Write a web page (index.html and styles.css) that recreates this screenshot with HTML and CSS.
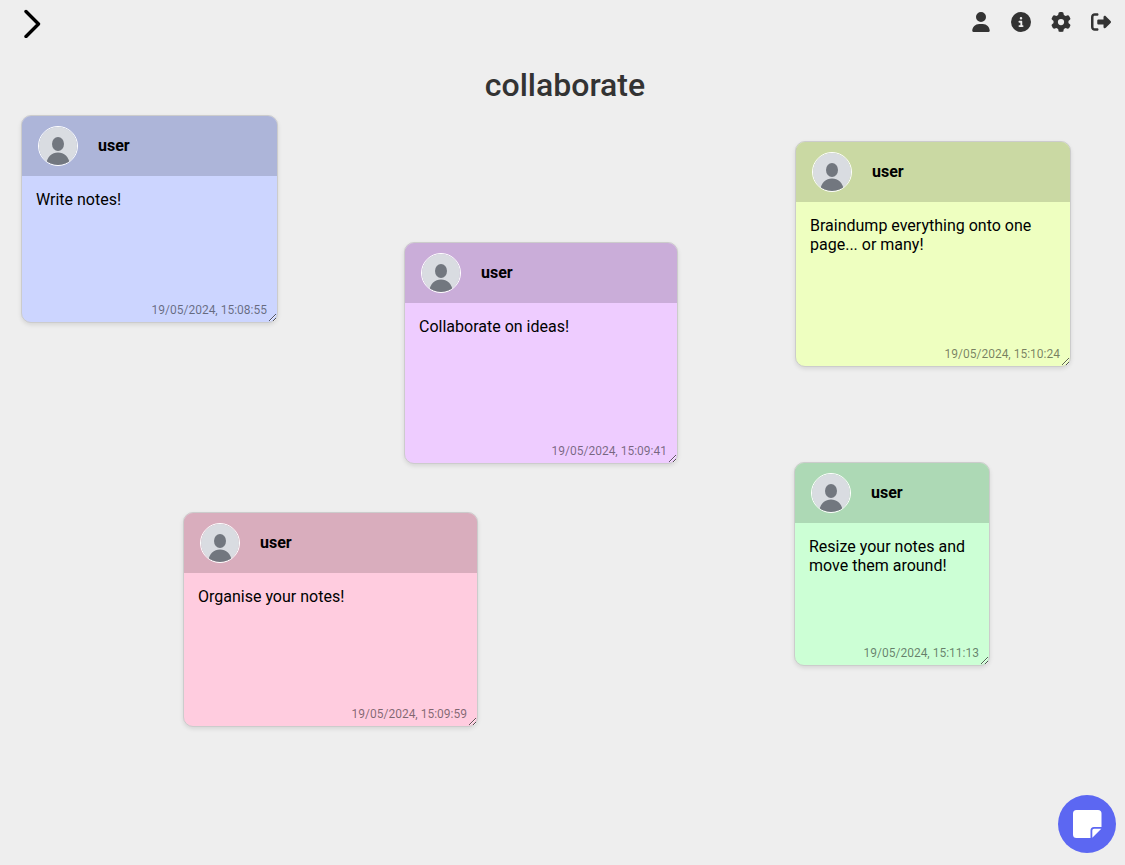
FILE: index.html
```html
<!DOCTYPE html>
<html lang="en">
<head>
<meta charset="utf-8">
<meta name="viewport" content="width=device-width, initial-scale=1">
<title>collaborate</title>
<link rel="stylesheet" href="styles.css">
</head>
<body>
<svg class="sprite" aria-hidden="true">
  <symbol id="avatar" viewBox="0 0 38 38">
    <rect width="38" height="38" fill="#d9dce1"/>
    <ellipse cx="19" cy="17" rx="6" ry="7" fill="#72777f"/>
    <path d="M7 38C8 29.500 13 25.500 19 25.500S30 29.500 31 38z" fill="#72777f"/>
  </symbol>
</svg>
<header class="topbar">
  <button class="icon-button" type="button" aria-label="Open menu">
    <svg class="chevron" viewBox="0 0 20 30"><path d="M4 3.500 16.500 16 4 28.500" fill="none" stroke="#000" stroke-width="3.400" stroke-linecap="round" stroke-linejoin="round"/></svg>
  </button>
  <nav class="actions" aria-label="Account">
    <button class="icon-button" type="button" aria-label="Profile"><svg class="icon" viewBox="0 0 448 512"><path d="M224 256A128 128 0 1 0 224 0a128 128 0 1 0 0 256zm-45.7 48C79.8 304 0 383.8 0 482.3C0 498.7 13.3 512 29.7 512l388.6 0c16.4 0 29.7-13.3 29.7-29.7C448 383.8 368.2 304 269.7 304l-91.4 0z"/></svg></button>
    <button class="icon-button" type="button" aria-label="Information"><svg class="icon" viewBox="0 0 512 512"><path d="M256 512A256 256 0 1 0 256 0a256 256 0 1 0 0 512zM216 336l24 0 0-64-24 0c-13.3 0-24-10.7-24-24s10.7-24 24-24l48 0c13.3 0 24 10.7 24 24l0 88 8 0c13.3 0 24 10.7 24 24s-10.7 24-24 24l-80 0c-13.3 0-24-10.7-24-24s10.7-24 24-24zm40-208a32 32 0 1 1 0 64 32 32 0 1 1 0-64z"/></svg></button>
    <button class="icon-button" type="button" aria-label="Settings"><svg class="icon" viewBox="0 0 512 512"><path d="M495.9 166.6c3.2 8.7 .5 18.4-6.4 24.6l-43.3 39.4c1.1 8.3 1.7 16.8 1.7 25.4s-.6 17.1-1.7 25.4l43.3 39.4c6.9 6.2 9.6 15.9 6.4 24.6c-4.4 11.9-9.7 23.3-15.8 34.3l-4.7 8.1c-6.6 11-14 21.4-22.1 31.2c-5.9 7.2-15.7 9.6-24.5 6.8l-55.7-17.7c-13.4 10.3-28.2 18.9-44 25.4l-12.5 57.1c-2 9.1-9 16.3-18.2 17.8c-13.8 2.3-28 3.5-42.5 3.5s-28.7-1.2-42.5-3.5c-9.2-1.5-16.2-8.7-18.2-17.8l-12.5-57.1c-15.8-6.5-30.6-15.1-44-25.4L83.1 425.9c-8.8 2.8-18.6 .3-24.5-6.8c-8.1-9.8-15.5-20.2-22.1-31.2l-4.7-8.1c-6.1-11-11.4-22.4-15.8-34.3c-3.2-8.7-.5-18.4 6.4-24.6l43.3-39.4C64.6 273.1 64 264.6 64 256s.6-17.1 1.7-25.4L22.4 191.2c-6.9-6.2-9.6-15.9-6.4-24.6c4.4-11.9 9.7-23.3 15.8-34.3l4.7-8.1c6.6-11 14-21.4 22.1-31.2c5.9-7.2 15.7-9.6 24.5-6.8l55.7 17.7c13.4-10.3 28.2-18.9 44-25.4l12.5-57.1c2-9.1 9-16.3 18.2-17.8C227.3 1.2 241.5 0 256 0s28.7 1.2 42.5 3.500c9.2 1.5 16.2 8.7 18.2 17.8l12.5 57.1c15.8 6.5 30.6 15.1 44 25.4l55.7-17.7c8.8-2.8 18.6-.3 24.5 6.8c8.1 9.8 15.5 20.2 22.1 31.2l4.7 8.1c6.1 11 11.4 22.4 15.8 34.3zM256 336a80 80 0 1 0 0-160 80 80 0 1 0 0 160z"/></svg></button>
    <button class="icon-button" type="button" aria-label="Log out"><svg class="icon" viewBox="0 0 512 512"><path d="M377.9 105.9L500.7 228.7c7.2 7.2 11.3 17.1 11.3 27.3s-4.1 20.1-11.3 27.3L377.9 406.1c-6.4 6.4-15 9.9-24 9.9c-18.7 0-33.9-15.2-33.9-33.9l0-62.1-128 0c-17.7 0-32-14.3-32-32l0-64c0-17.7 14.3-32 32-32l128 0 0-62.1c0-18.7 15.2-33.9 33.9-33.9c9 0 17.6 3.6 24 9.9zM160 96L96 96c-17.7 0-32 14.3-32 32l0 256c0 17.7 14.3 32 32 32l64 0c17.7 0 32 14.3 32 32s-14.3 32-32 32l-64 0c-53 0-96-43-96-96L0 128C0 75 43 32 96 32l64 0c17.7 0 32 14.3 32 32s-14.3 32-32 32z"/></svg></button>
  </nav>
</header>
<h1 class="title">collaborate</h1>
<main class="board">
  <article class="note note-blue">
    <header class="note-head"><svg class="avatar" role="img" aria-label="Avatar"><use href="#avatar"/></svg><span class="name">user</span></header>
    <p class="note-text">Write notes!</p>
    <time class="stamp" datetime="2024-05-19T15:08:55">19/05/2024, 15:08:55</time>
  </article>
  <article class="note note-yellow">
    <header class="note-head"><svg class="avatar" role="img" aria-label="Avatar"><use href="#avatar"/></svg><span class="name">user</span></header>
    <p class="note-text">Braindump everything onto one page... or many!</p>
    <time class="stamp" datetime="2024-05-19T15:10:24">19/05/2024, 15:10:24</time>
  </article>
  <article class="note note-purple">
    <header class="note-head"><svg class="avatar" role="img" aria-label="Avatar"><use href="#avatar"/></svg><span class="name">user</span></header>
    <p class="note-text">Collaborate on ideas!</p>
    <time class="stamp" datetime="2024-05-19T15:09:41">19/05/2024, 15:09:41</time>
  </article>
  <article class="note note-green">
    <header class="note-head"><svg class="avatar" role="img" aria-label="Avatar"><use href="#avatar"/></svg><span class="name">user</span></header>
    <p class="note-text">Resize your notes and move them around!</p>
    <time class="stamp" datetime="2024-05-19T15:11:13">19/05/2024, 15:11:13</time>
  </article>
  <article class="note note-pink">
    <header class="note-head"><svg class="avatar" role="img" aria-label="Avatar"><use href="#avatar"/></svg><span class="name">user</span></header>
    <p class="note-text">Organise your notes!</p>
    <time class="stamp" datetime="2024-05-19T15:09:59">19/05/2024, 15:09:59</time>
  </article>
</main>
<button class="add-note" type="button" aria-label="Add note">
  <svg class="add-icon" viewBox="0 0 30 30"><path d="M4.500 1H26Q29.500 1 29.500 4.500V18H22Q18.500 18 18.500 21.500V29H4.500Q1 29 1 25.500V4.500Q1 1 4.500 1zM22 19.800H29.300L20.300 28.800V21.500Q20.300 19.800 22 19.800z" fill="#fff"/></svg>
</button>
</body>
</html>
```
FILE: styles.css
```css
* {
  box-sizing: border-box;
}

body {
  display: flex;
  flex-direction: column;
  min-height: 100vh;
  margin: 0;
  background: #eee;
  color: #000;
  font-family: Roboto, sans-serif;
  font-size: 16px;
}

.sprite {
  position: absolute;
  width: 0;
  height: 0;
}

button {
  display: flex;
  align-items: center;
  justify-content: center;
  padding: 0;
  border: 0;
  background: none;
  cursor: pointer;
}

.topbar {
  display: flex;
  justify-content: space-between;
  align-items: flex-start;
  padding: 8px 14px 0 22px;
}

.chevron {
  width: 20px;
  height: 30px;
}

.actions {
  display: flex;
  gap: 20px;
  padding-top: 4px;
}

.icon {
  width: 20px;
  height: 20px;
  fill: #333;
}

.title {
  margin: 28px 0 0;
  padding-left: 5px;
  color: #333;
  font-size: 32px;
  font-weight: 500;
  line-height: 38px;
  text-align: center;
}

.board {
  position: relative;
  flex: 1;
}

.note {
  position: absolute;
  display: flex;
  flex-direction: column;
  overflow: hidden;
  resize: both;
  border: 1px solid #ccc;
  border-radius: 10px;
  box-shadow: 0 2px 4px rgba(0, 0, 0, 0.1);
}

.note-head {
  display: flex;
  align-items: center;
  gap: 20px;
  height: 60px;
  padding: 0 16px;
  background: rgba(0, 0, 0, 0.15);
}

.avatar {
  width: 40px;
  height: 40px;
  border: 1px solid #fff;
  border-radius: 50%;
}

.name {
  padding-bottom: 2px;
  font-weight: 700;
}

.note-text {
  flex: 1;
  margin: 0;
  padding: 14px 14px 0;
  line-height: 19px;
}

.stamp {
  padding: 0 10px 5px;
  color: rgba(0, 0, 0, 0.5);
  font-size: 12px;
  line-height: 14px;
  text-align: right;
}

.note-blue {
  left: 21px;
  top: 11px;
  width: 257px;
  height: 208px;
  background: #ccd5ff;
}

.note-yellow {
  left: 795px;
  top: 37px;
  width: 276px;
  height: 226px;
  background: #eeffc0;
}

.note-purple {
  left: 404px;
  top: 138px;
  width: 274px;
  height: 222px;
  background: #eeccff;
}

.note-green {
  left: 794px;
  top: 358px;
  width: 196px;
  height: 204px;
  background: #ccffd5;
}

.note-pink {
  left: 183px;
  top: 408px;
  width: 295px;
  height: 215px;
  background: #ffccdf;
}

.add-note {
  position: fixed;
  right: 9px;
  bottom: 12px;
  width: 58px;
  height: 58px;
  border-radius: 50%;
  background: #5c67f2;
}

.add-icon {
  width: 30px;
  height: 30px;
}
```
